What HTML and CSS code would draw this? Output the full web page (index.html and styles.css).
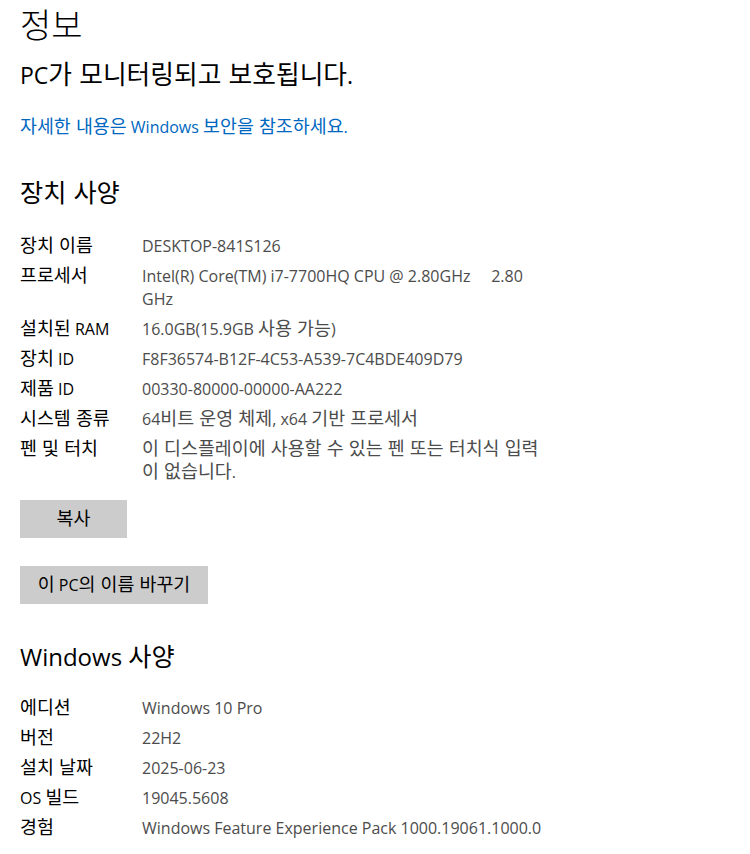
FILE: index.html
```html
<!DOCTYPE html>
<html lang="ko">
<head>
<meta charset="utf-8">
<title>정보</title>
<link rel="stylesheet" href="styles.css">
</head>
<body>
<main class="page">
  <h1 class="title">정보</h1>
  <p class="status">PC<span class="k">가 모니터링되고 보호됩니다</span>.</p>
  <a class="link" href="#"><span class="k">자세한 내용은</span> Windows <span class="k">보안을 참조하세요</span>.</a>

  <h2 class="section"><span class="k">장치 사양</span></h2>
  <dl class="specs">
    <dt><span class="k">장치 이름</span></dt><dd>DESKTOP-841S126</dd>
    <dt><span class="k">프로세서</span></dt><dd>Intel(R) Core(TM) i7-7700HQ CPU @ 2.80GHz&nbsp;&nbsp;&nbsp;&nbsp;&nbsp;2.80 GHz</dd>
    <dt><span class="k">설치된</span> RAM</dt><dd>16.0GB(15.9GB <span class="k">사용 가능</span>)</dd>
    <dt><span class="k">장치</span> ID</dt><dd>F8F36574-B12F-4C53-A539-7C4BDE409D79</dd>
    <dt><span class="k">제품</span> ID</dt><dd>00330-80000-00000-AA222</dd>
    <dt><span class="k">시스템 종류</span></dt><dd>64<span class="k">비트 운영 체제</span>, x64 <span class="k">기반 프로세서</span></dd>
    <dt><span class="k">펜 및 터치</span></dt><dd><span class="k">이 디스플레이에 사용할 수 있는 펜 또는 터치식 입력이 없습니다</span>.</dd>
  </dl>

  <button class="btn btn-copy" type="button"><span class="k">복사</span></button>
  <button class="btn btn-rename" type="button"><span class="k">이</span> PC<span class="k">의 이름 바꾸기</span></button>

  <h2 class="section section-win">Windows <span class="k">사양</span></h2>
  <dl class="specs specs-win">
    <dt><span class="k">에디션</span></dt><dd>Windows 10 Pro</dd>
    <dt><span class="k">버전</span></dt><dd>22H2</dd>
    <dt><span class="k">설치 날짜</span></dt><dd>2025-06-23</dd>
    <dt>OS <span class="k">빌드</span></dt><dd>19045.5608</dd>
    <dt><span class="k">경험</span></dt><dd>Windows Feature Experience Pack 1000.19061.1000.0</dd>
  </dl>
</main>
</body>
</html>
```

FILE: styles.css
```css
html, body {
  margin: 0;
  padding: 0;
  background: #ffffff;
}

body {
  font-family: "Open Sans", "Noto Sans CJK KR", sans-serif;
  color: #000000;
}

.k {
  font-family: "Noto Sans CJK KR", sans-serif;
  font-size: 1.15em;
  line-height: 1;
}

.page {
  padding: 0 0 0 20px;
  display: flex;
  flex-direction: column;
  align-items: flex-start;
}

.title {
  margin: 0;
  font-family: "Noto Sans CJK KR", sans-serif;
  font-size: 34px;
  font-weight: 300;
  line-height: 48px;
}

.status {
  margin: 5px 0 0;
  font-size: 23px;
  font-weight: 400;
  line-height: 44px;
}

.status .k {
  font-size: 1.12em;
}

.link {
  margin-top: 19px;
  font-size: 16px;
  line-height: 23px;
  color: #0067c0;
  text-decoration: none;
}

.link .k {
  font-size: 1.15em;
}

.section {
  margin: 37px 0 0;
  font-size: 24px;
  font-weight: 400;
  line-height: 34px;
}

.section .k {
  font-size: 1.05em;
}

.section-win {
  margin-top: 36px;
}

.specs {
  margin: 25px 0 0;
  display: grid;
  grid-template-columns: 122px 402px;
  row-gap: 7px;
  font-size: 16px;
  line-height: 23px;
}

.specs-win {
  margin-top: 23px;
}

.specs dt {
  color: #000000;
}

.specs dd {
  margin: 0;
  color: #4c4c4c;
}

.btn {
  border: 0;
  background: #cccccc;
  color: #000000;
  font-family: "Open Sans", "Noto Sans CJK KR", sans-serif;
  font-size: 16px;
  line-height: 23px;
  height: 38px;
  padding: 0;
  text-align: center;
}

.btn-copy {
  margin-top: 16px;
  width: 107px;
}

.btn-rename {
  margin-top: 28px;
  width: 188px;
}
```
